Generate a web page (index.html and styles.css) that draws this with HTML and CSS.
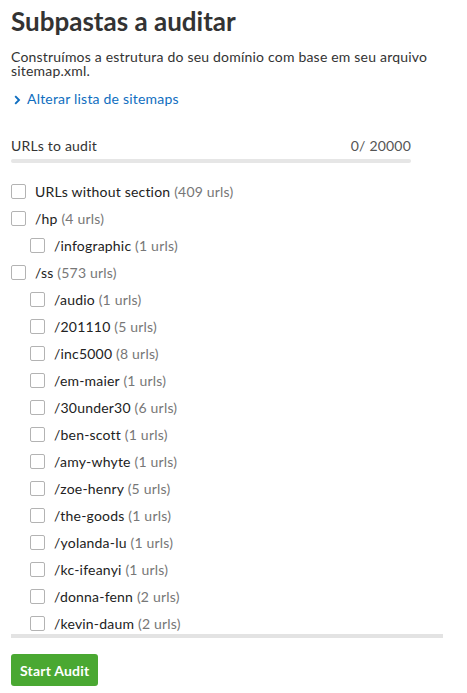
FILE: index.html
```html
<!DOCTYPE html>
<html>
<head>
<meta charset="utf-8">
<link rel="stylesheet" href="styles.css">
</head>
<body>
<div class="page">
  <h1 class="title">Subpastas a auditar</h1>
  <p class="desc">Construímos a estrutura do seu domínio com base em seu arquivo sitemap.xml.</p>
  <a class="link" href="#"><svg class="chev" width="7" height="10" viewBox="0 0 7 10"><path d="M1.2 1.2 L5 5 L1.2 8.8" fill="none" stroke="#0f6ec0" stroke-width="1.9"/></svg>Alterar lista de sitemaps</a>
  <div class="counter">
    <div class="counter-row"><span>URLs to audit</span><span class="count">0/ 20000</span></div>
    <div class="bar"></div>
  </div>
  <div class="list-wrap">
    <ul class="list">
      <li class="item"><span class="cb"></span><span class="name">URLs without section <span class="n">(409 urls)</span></span></li>
      <li class="item"><span class="cb"></span><span class="name">/hp <span class="n">(4 urls)</span></span></li>
      <li class="item sub"><span class="cb"></span><span class="name">/infographic <span class="n">(1 urls)</span></span></li>
      <li class="item"><span class="cb"></span><span class="name">/ss <span class="n">(573 urls)</span></span></li>
      <li class="item sub"><span class="cb"></span><span class="name">/audio <span class="n">(1 urls)</span></span></li>
      <li class="item sub"><span class="cb"></span><span class="name">/201110 <span class="n">(5 urls)</span></span></li>
      <li class="item sub"><span class="cb"></span><span class="name">/inc5000 <span class="n">(8 urls)</span></span></li>
      <li class="item sub"><span class="cb"></span><span class="name">/em-maier <span class="n">(1 urls)</span></span></li>
      <li class="item sub"><span class="cb"></span><span class="name">/30under30 <span class="n">(6 urls)</span></span></li>
      <li class="item sub"><span class="cb"></span><span class="name">/ben-scott <span class="n">(1 urls)</span></span></li>
      <li class="item sub"><span class="cb"></span><span class="name">/amy-whyte <span class="n">(1 urls)</span></span></li>
      <li class="item sub"><span class="cb"></span><span class="name">/zoe-henry <span class="n">(5 urls)</span></span></li>
      <li class="item sub"><span class="cb"></span><span class="name">/the-goods <span class="n">(1 urls)</span></span></li>
      <li class="item sub"><span class="cb"></span><span class="name">/yolanda-lu <span class="n">(1 urls)</span></span></li>
      <li class="item sub"><span class="cb"></span><span class="name">/kc-ifeanyi <span class="n">(1 urls)</span></span></li>
      <li class="item sub"><span class="cb"></span><span class="name">/donna-fenn <span class="n">(2 urls)</span></span></li>
      <li class="item sub"><span class="cb"></span><span class="name">/kevin-daum <span class="n">(2 urls)</span></span></li>
    </ul>
  </div>
  <button class="btn">Start Audit</button>
</div>
</body>
</html>
```
FILE: styles.css
```css
* { box-sizing: border-box; }
html, body { margin: 0; padding: 0; background: #fff; }
body {
  font-family: "Lato", "Noto Sans", sans-serif;
  color: #333;
  font-size: 14px;
  letter-spacing: 0.2px;
}
.page {
  padding: 0 24px 0 11px;
  width: 467px;
}
.title {
  margin: 0;
  padding-top: 5px;
  font-size: 26px;
  font-weight: 700;
  line-height: 32px;
  letter-spacing: 0;
  color: #333;
}
.desc {
  margin: 13px 0 0 0;
  line-height: 14px;
  font-size: 14px;
}
.link {
  display: flex;
  align-items: center;
  gap: 6px;
  margin-top: 12px;
  color: #0f6ec0;
  text-decoration: none;
  line-height: 18px;
}
.chev { margin-left: 3px; margin-top: 1px; }
.counter {
  margin-top: 29px;
  width: 400px;
}
.counter-row {
  display: flex;
  justify-content: space-between;
  line-height: 18px;
}
.count { color: #555; }
.bar {
  margin-top: 4px;
  height: 4px;
  border-radius: 2px;
  background: #e6e6e6;
}
.list-wrap {
  margin-top: 13px;
  width: 432px;
  height: 462px;
  overflow: hidden;
  border-bottom: 4px solid #e3e3e3;
}
.list {
  list-style: none;
  margin: 0;
  padding: 2px 0 0 0;
}
.item {
  display: flex;
  align-items: center;
  gap: 9px;
  height: 27px;
}
.item.sub { padding-left: 19px; }
.cb {
  width: 15px;
  height: 15px;
  border: 1px solid #b3b3b3;
  border-radius: 2px;
  background: #fff;
  flex: none;
}
.name { color: #222; white-space: nowrap; }
.n { color: #777; }
.btn {
  display: block;
  margin-top: 16px;
  height: 32px;
  padding: 0 9px;
  background: #4aa832;
  color: #fff;
  border: none;
  border-radius: 3px;
  font-family: inherit;
  font-size: 14px;
  font-weight: 700;
  letter-spacing: 0.2px;
  white-space: nowrap;
}
```
